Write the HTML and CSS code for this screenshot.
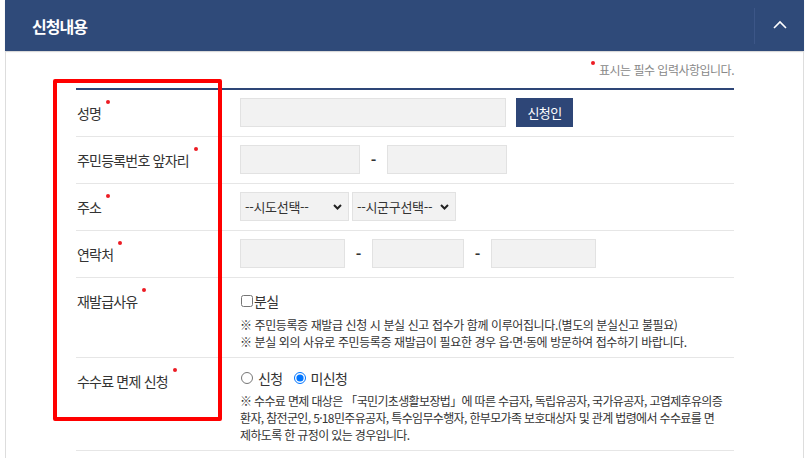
FILE: index.html
```html
<!DOCTYPE html>
<html lang="ko">
<head>
<meta charset="utf-8">
<title>신청내용</title>
<link rel="stylesheet" href="styles.css">
</head>
<body>
<div class="panel">
  <div class="panel-head">
    <h2 class="panel-title">신청내용</h2>
    <button class="toggle" type="button" aria-label="접기">
      <svg width="14" height="9" viewBox="0 0 14 9"><path d="M1 8 L7 2 L13 8" fill="none" stroke="#fff" stroke-width="1.6"/></svg>
    </button>
  </div>
  <div class="panel-body">
    <p class="req-note"><span class="dot dot-note"></span>표시는 필수 입력사항입니다.</p>
    <div class="form">
      <div class="row">
        <div class="label">성명<span class="dot"></span></div>
        <div class="field">
          <input class="inp w266" type="text">
          <button class="btn" type="button">신청인</button>
        </div>
      </div>
      <div class="row">
        <div class="label">주민등록번호 앞자리<span class="dot"></span></div>
        <div class="field">
          <input class="inp w120" type="text">
          <span class="dash">-</span>
          <input class="inp w120" type="text">
        </div>
      </div>
      <div class="row">
        <div class="label">주소<span class="dot"></span></div>
        <div class="field sel-gap">
          <div class="sel w109"><span>--시도선택--</span><svg width="9" height="6" viewBox="0 0 9 6"><path d="M1 1 L4.5 4.5 L8 1" fill="none" stroke="#222" stroke-width="2"/></svg></div>
          <div class="sel w104"><span>--시군구선택--</span><svg width="9" height="6" viewBox="0 0 9 6"><path d="M1 1 L4.5 4.5 L8 1" fill="none" stroke="#222" stroke-width="2"/></svg></div>
        </div>
      </div>
      <div class="row">
        <div class="label">연락처<span class="dot"></span></div>
        <div class="field">
          <input class="inp w105" type="text">
          <span class="dash">-</span>
          <input class="inp w92" type="text">
          <span class="dash">-</span>
          <input class="inp w105" type="text">
        </div>
      </div>
      <div class="row">
        <div class="label">재발급사유<span class="dot"></span></div>
        <div class="field block">
          <label class="opt"><input type="checkbox" class="chk">분실</label>
          <p class="help">※ 주민등록증 재발급 신청 시 분실 신고 접수가 함께 이루어집니다.(별도의 분실신고 불필요)<br>※ 분실 외의 사유로 주민등록증 재발급이 필요한 경우 읍·면·동에 방문하여 접수하기 바랍니다.</p>
        </div>
      </div>
      <div class="row">
        <div class="label">수수료 면제 신청<span class="dot"></span></div>
        <div class="field block">
          <div class="opts">
            <label class="opt"><input type="radio" name="fee" class="rad">신청</label>
            <label class="opt"><input type="radio" name="fee" class="rad" checked>미신청</label>
          </div>
          <p class="help wrap">※ 수수료 면제 대상은 「국민기초생활보장법」에 따른 수급자, 독립유공자, 국가유공자, 고엽제후유의증<br>환자, 참전군인, 5·18민주유공자, 특수임무수행자, 한부모가족 보호대상자 및 관계 법령에서 수수료를 면<br>제하도록 한 규정이 있는 경우입니다.</p>
        </div>
      </div>
    </div>
    <div class="highlight" aria-hidden="true"></div>
  </div>
</div>
</body>
</html>
```
FILE: styles.css
```css
* { box-sizing: border-box; }
html, body { margin: 0; padding: 0; background: #fff; }
body {
  font-family: "Noto Sans CJK KR", "Noto Sans", sans-serif;
  color: #333;
  padding-left: 5px;
}
.panel { width: 799px; }
.panel-head {
  height: 51px;
  background: #2f4a79;
  display: flex;
  align-items: center;
  justify-content: space-between;
  box-shadow: 0 1px 1px rgba(0,0,0,0.15);
}
.panel-title {
  margin: 0 0 0 27px;
  color: #fff;
  font-size: 16px;
  font-weight: 700;
  letter-spacing: -1px;
}
.toggle {
  width: 50px;
  height: 36px;
  background: transparent;
  border: 0;
  border-left: 1px solid #3c5687;
  display: flex;
  align-items: center;
  justify-content: center;
  padding: 0 0 2px 0;
}
.panel-body {
  position: relative;
  border-left: 1px solid #ddd;
  border-right: 1px solid #ddd;
  padding: 9px 69px 0 70px;
  height: 407px;
}
.req-note {
  margin: 0;
  text-align: right;
  font-size: 12px;
  color: #888;
  letter-spacing: -0.5px;
  line-height: 20px;
}
.dot {
  display: inline-block;
  width: 4px;
  height: 4px;
  border-radius: 50%;
  background: #ec1c24;
  margin-left: 5px;
  vertical-align: top;
  transform: translateY(-4px);
}
.dot-note { margin: 0 4px 0 0; transform: translateY(1px); }
.form {
  margin-top: 8px;
  border-top: 2px solid #2e4677;
}
.row {
  display: grid;
  grid-template-columns: 164px 1fr;
  border-bottom: 1px solid #e6e6e6;
}
.label {
  padding: 14px 0 0 1px;
  font-size: 14px;
  line-height: 18px;
  color: #333;
  letter-spacing: -0.8px;
}
.field {
  display: flex;
  align-items: center;
  padding: 8px 0 9px;
}
.field.block {
  display: block;
  padding: 10px 0 7px;
}
.inp {
  height: 29px;
  background: #f2f2f2;
  border: 1px solid #e2e2e2;
  margin: 0;
  padding: 0 6px;
  font: inherit;
}
.w266 { width: 266px; }
.w120 { width: 120px; }
.w105 { width: 105px; }
.w92 { width: 92px; }
.w109 { width: 109px; }
.w104 { width: 104px; }
.btn {
  margin-left: 10px;
  height: 29px;
  width: 57px;
  border: 0;
  background: #2e4677;
  color: #fff;
  font-family: inherit;
  font-size: 13px;
  letter-spacing: -0.6px;
  padding: 0;
}
.dash {
  width: 27px;
  text-align: center;
  font-size: 15px;
  font-weight: 700;
  color: #333;
}
.sel-gap { gap: 3px; }
.sel {
  height: 29px;
  background: #f2f2f2;
  border: 1px solid #e2e2e2;
  display: flex;
  align-items: center;
  justify-content: space-between;
  padding: 0 6px 0 4px;
  font-size: 13px;
  color: #333;
  letter-spacing: -0.3px;
}
.opt {
  display: inline-flex;
  align-items: center;
  font-size: 14px;
  line-height: 20px;
  letter-spacing: -0.6px;
  color: #333;
}
.chk {
  width: 12px;
  height: 12px;
  margin: 0 1px 0 1px;
}
.opts { display: flex; gap: 10px; }
.rad {
  width: 12px;
  height: 12px;
  margin: 0 5px 0 1px;
}
.help {
  margin: 4px 0 0;
  font-size: 12px;
  line-height: 17px;
  color: #333;
  letter-spacing: -0.4px;
}
.help.wrap { white-space: nowrap; letter-spacing: -0.65px; }
.highlight {
  position: absolute;
  left: 47px;
  top: 28px;
  width: 169px;
  height: 342px;
  border: 4px solid #ff0000;
  border-radius: 2px;
  pointer-events: none;
}
```
